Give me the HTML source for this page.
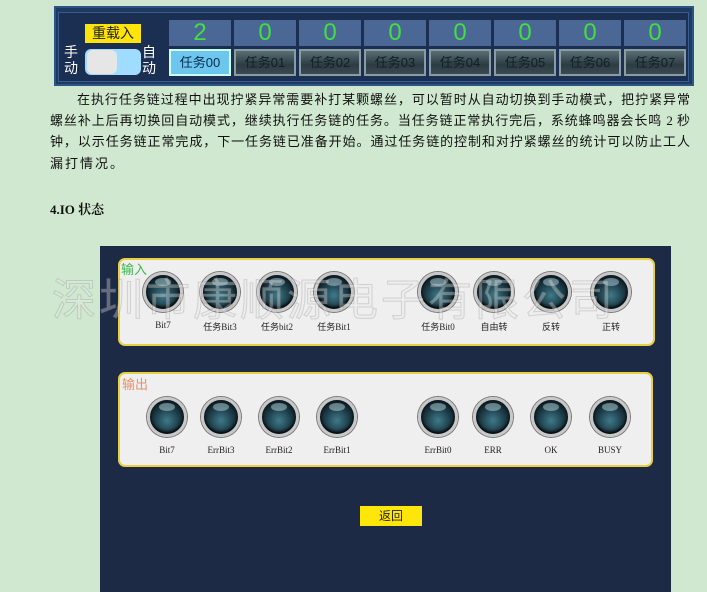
<!DOCTYPE html>
<html><head><meta charset="utf-8"><style>
*{margin:0;padding:0;box-sizing:border-box}
body{width:707px;height:592px;background:#cfe8cf;position:relative;overflow:hidden;font-family:"Liberation Serif","Noto Serif CJK SC",serif}
.a{position:absolute}
.top{left:54px;top:6px;width:640px;height:80px;background:#1d3a63;border:2px solid #2d5486}
.topin{left:58px;top:12px;width:631px;height:70px;background:#1a2f52;border:1px solid #3a5c8c}
.cnt{top:20px;width:62px;height:26px;background:#4a6796;color:#3fe03f;font:24px "Liberation Sans",sans-serif;text-align:center;line-height:26px}
.btn{top:49px;width:62px;height:27px;background:linear-gradient(#5a6e74,#2c3c42 60%,#3a4a50);border:2px solid #8a9ca3;color:#0e1f25;font:13px "Liberation Sans","Noto Sans CJK SC",sans-serif;text-align:center;line-height:23px}
.btn.on{background:#6cc6ee;border-color:#cfe;color:#0a2a50}
.ln{position:absolute;left:50px;width:640px;font-size:13px;line-height:16px;color:#111;text-align:justify;text-align-last:justify;white-space:nowrap;font-family:"Liberation Serif","Noto Sans CJK SC",serif}
.panel{left:100px;top:246px;width:571px;height:346px;background:#1d2a45}
.box{background:#efefef;border:2px solid #e8d040;border-radius:7px}
.led{width:40px;height:40px;border-radius:50%;background:radial-gradient(circle at 50% 60%,#3f7a8a 0,#1e3e4a 45%,#0c1a20 75%);border:3px solid #c8c8c8;box-shadow:0 0 0 1px #777,inset 0 -2px 3px #000}
.led:after{content:"";position:absolute;left:9px;top:3px;width:16px;height:8px;border-radius:50%;background:rgba(200,230,240,.45)}
.lb{font-size:9px;color:#222;width:70px;text-align:center;font-family:"Liberation Serif","Noto Sans CJK SC",serif}
</style></head><body>
<div class="a top"></div><div class="a topin"></div>
<div class="a" style="left:85px;top:24px;width:56px;height:19px;background:#ffe40a;font:14px 'Liberation Sans','Noto Sans CJK SC',sans-serif;text-align:center;line-height:19px;color:#222">重载入</div>
<div class="a" style="left:64px;top:44px;color:#fff;font:14px/16px 'Liberation Sans','Noto Sans CJK SC',sans-serif;width:16px">手<br>动</div>
<div class="a" style="left:142px;top:44px;color:#fff;font:14px/16px 'Liberation Sans','Noto Sans CJK SC',sans-serif;width:16px">自<br>动</div>
<div class="a" style="left:85px;top:49px;width:56px;height:26px;background:#9fdcff;border-radius:6px"></div>
<div class="a" style="left:87px;top:50px;width:30px;height:24px;background:#e6e6e6;border-radius:6px"></div>

<div class="a cnt" style="left:169px">2</div><div class="a cnt" style="left:234px">0</div><div class="a cnt" style="left:299px">0</div><div class="a cnt" style="left:364px">0</div><div class="a cnt" style="left:429px">0</div><div class="a cnt" style="left:494px">0</div><div class="a cnt" style="left:559px">0</div><div class="a cnt" style="left:624px">0</div>
<div class="a btn on" style="left:169px">任务00</div><div class="a btn" style="left:234px">任务01</div><div class="a btn" style="left:299px">任务02</div><div class="a btn" style="left:364px">任务03</div><div class="a btn" style="left:429px">任务04</div><div class="a btn" style="left:494px">任务05</div><div class="a btn" style="left:559px">任务06</div><div class="a btn" style="left:624px">任务07</div>

<div class="ln" style="top:92px;left:77px;width:613px">在执行任务链过程中出现拧紧异常需要补打某颗螺丝，可以暂时从自动切换到手动模式，把拧紧异常</div>
<div class="ln" style="top:113px">螺丝补上后再切换回自动模式，继续执行任务链的任务。当任务链正常执行完后，系统蜂鸣器会长鸣 2 秒</div>
<div class="ln" style="top:134px">钟，以示任务链正常完成，下一任务链已准备开始。通过任务链的控制和对拧紧螺丝的统计可以防止工人</div>
<div class="ln" style="top:156px;text-align-last:left;width:auto;letter-spacing:2px">漏打情况。</div>
<div class="a" style="left:50px;top:199px;font-size:13px;font-weight:bold;color:#111">4.IO 状态</div>

<div class="a panel"></div>
<div class="a box" style="left:118px;top:258px;width:537px;height:88px"></div>
<div class="a" style="left:121px;top:259px;color:#3cb84c;font:13px 'Liberation Sans','Noto Sans CJK SC',sans-serif">输入</div>
<div class="a box" style="left:118px;top:372px;width:535px;height:95px"></div>
<div class="a" style="left:122px;top:374px;color:#e8906a;font:13px 'Liberation Sans','Noto Sans CJK SC',sans-serif">输出</div>

<div class="a led" style="left:143px;top:272px"></div><div class="a led" style="left:200px;top:272px"></div><div class="a led" style="left:257px;top:272px"></div><div class="a led" style="left:314px;top:272px"></div><div class="a led" style="left:418px;top:272px"></div><div class="a led" style="left:474px;top:272px"></div><div class="a led" style="left:531px;top:272px"></div><div class="a led" style="left:591px;top:272px"></div>
<div class="a lb" style="left:128px;top:320px">Bit7</div><div class="a lb" style="left:185px;top:320px">任务Bit3</div><div class="a lb" style="left:242px;top:320px">任务bit2</div><div class="a lb" style="left:299px;top:320px">任务Bit1</div><div class="a lb" style="left:403px;top:320px">任务Bit0</div><div class="a lb" style="left:459px;top:320px">自由转</div><div class="a lb" style="left:516px;top:320px">反转</div><div class="a lb" style="left:576px;top:320px">正转</div>

<div class="a led" style="left:147px;top:397px"></div><div class="a led" style="left:201px;top:397px"></div><div class="a led" style="left:259px;top:397px"></div><div class="a led" style="left:317px;top:397px"></div><div class="a led" style="left:418px;top:397px"></div><div class="a led" style="left:473px;top:397px"></div><div class="a led" style="left:531px;top:397px"></div><div class="a led" style="left:590px;top:397px"></div>
<div class="a lb" style="left:132px;top:445px">Bit7</div><div class="a lb" style="left:186px;top:445px">ErrBit3</div><div class="a lb" style="left:244px;top:445px">ErrBit2</div><div class="a lb" style="left:302px;top:445px">ErrBit1</div><div class="a lb" style="left:403px;top:445px">ErrBit0</div><div class="a lb" style="left:458px;top:445px">ERR</div><div class="a lb" style="left:516px;top:445px">OK</div><div class="a lb" style="left:575px;top:445px">BUSY</div>

<div class="a" style="left:360px;top:506px;width:62px;height:20px;background:#ffe60a;text-align:center;font:12px/20px 'Liberation Sans','Noto Sans CJK SC',sans-serif;color:#222">返回</div>

<div class="a" style="left:52px;top:276px;width:620px;font:44px/50px 'Liberation Sans','Noto Sans CJK SC',sans-serif;color:rgba(235,235,235,.35);letter-spacing:3px;white-space:nowrap;-webkit-text-stroke:1px rgba(120,120,120,.25)">深圳市康顺源电子有限公司</div>
</body></html>
